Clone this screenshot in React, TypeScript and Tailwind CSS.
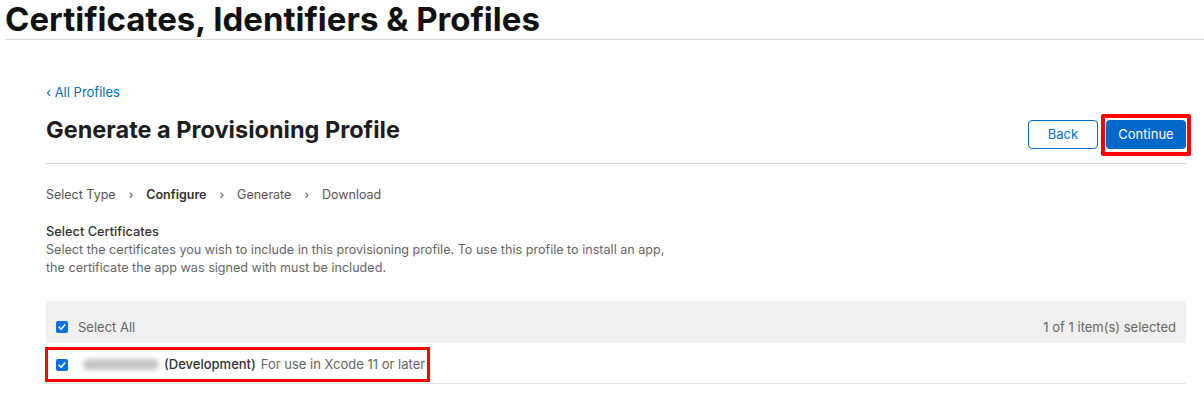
import React from 'react';

function Check() {
  return (
    <span className="flex h-[12px] w-[12px] items-center justify-center rounded-[2px] bg-[#0b6fdc]">
      <svg viewBox="0 0 12 12" className="h-[10px] w-[10px]" fill="none">
        <path d="M2.5 6.2 L5 8.6 L9.5 3.4" stroke="white" strokeWidth="1.8" strokeLinecap="round" strokeLinejoin="round" />
      </svg>
    </span>
  );
}

function Chevron() {
  return <span className="mx-[13px] text-[12px] text-[#555]">›</span>;
}

export default function App() {
  return (
    <div className="h-[395px] w-[1204px] overflow-hidden bg-white font-['Inter',sans-serif] text-[#1d1d1f]">
      {/* Page title */}
      <div className="ml-[6px] h-[40px] border-b border-[#d8d8d8]">
        <h1 className="-ml-[1px] text-[33px] leading-[38px] font-bold text-[#111]">
          Certificates, Identifiers &amp; Profiles
        </h1>
      </div>

      <div className="ml-[46px] w-[1140px]">
        <div className="pt-[44px] text-[13px] leading-[16px] text-[#0070c9]">‹ All Profiles</div>

        {/* Header row */}
        <div className="mt-[14px] flex h-[50px] items-start justify-between border-b border-[#d6d6d6]">
          <h2 className="text-[23.5px] leading-[32px] font-bold text-[#1d1d1f]">Generate a Provisioning Profile</h2>
          <div className="flex items-start">
            <button className="mt-[6px] h-[29px] w-[70px] rounded-[4px] border border-[#0070c9] bg-white text-[13px] text-[#0070c9]">
              Back
            </button>
            <div className="-mr-[5px] ml-[3px] rounded-[2px] border-[4px] border-[#ff0000] pt-[2px] pr-[1px] pb-[3px] pl-[1px]">
              <button className="block h-[29px] w-[80px] rounded-[4px] bg-[#0068c9] text-[13px] text-white">
                Continue
              </button>
            </div>
          </div>
        </div>

        {/* Steps */}
        <div className="mt-[23px] flex items-center text-[12.5px] leading-[16px] text-[#555]">
          <span>Select Type</span>
          <Chevron />
          <span className="font-semibold text-[#333]">Configure</span>
          <Chevron />
          <span>Generate</span>
          <Chevron />
          <span>Download</span>
        </div>

        {/* Section */}
        <div className="mt-[20px] text-[12.8px] font-medium leading-[18px] text-[#333]">Select Certificates</div>
        <p className="w-[640px] text-[12.6px] leading-[18px] text-[#666]">
          Select the certificates you wish to include in this provisioning profile. To use this profile to install an app,
          the certificate the app was signed with must be included.
        </p>

        {/* Table */}
        <div className="mt-[24px]">
          <div className="flex h-[42px] items-end justify-between bg-[#f0f0f0] px-[10px] pb-[6px] text-[13px] text-[#666]">
            <label className="flex items-center gap-[10px]">
              <Check />
              <span>Select All</span>
            </label>
            <span>1 of 1 item(s) selected</span>
          </div>
          <div className="flex h-[41px] items-end border-b border-[#e6e6e6] pb-[1px]">
            <div className="-ml-[1px] flex h-[35px] items-center border-[3px] border-[#ff0000] pl-[8px] pr-[2px] text-[13px]">
              <Check />
              <span className="ml-[15px] h-[11px] w-[76px] rounded-full bg-[#c4c4c4] blur-[2.5px]" />
              <span className="ml-[5px] font-medium text-[#333]">(Development)</span>
              <span className="ml-[5px] text-[#666]">For use in Xcode 11 or later</span>
            </div>
          </div>
        </div>
      </div>
    </div>
  );
}
